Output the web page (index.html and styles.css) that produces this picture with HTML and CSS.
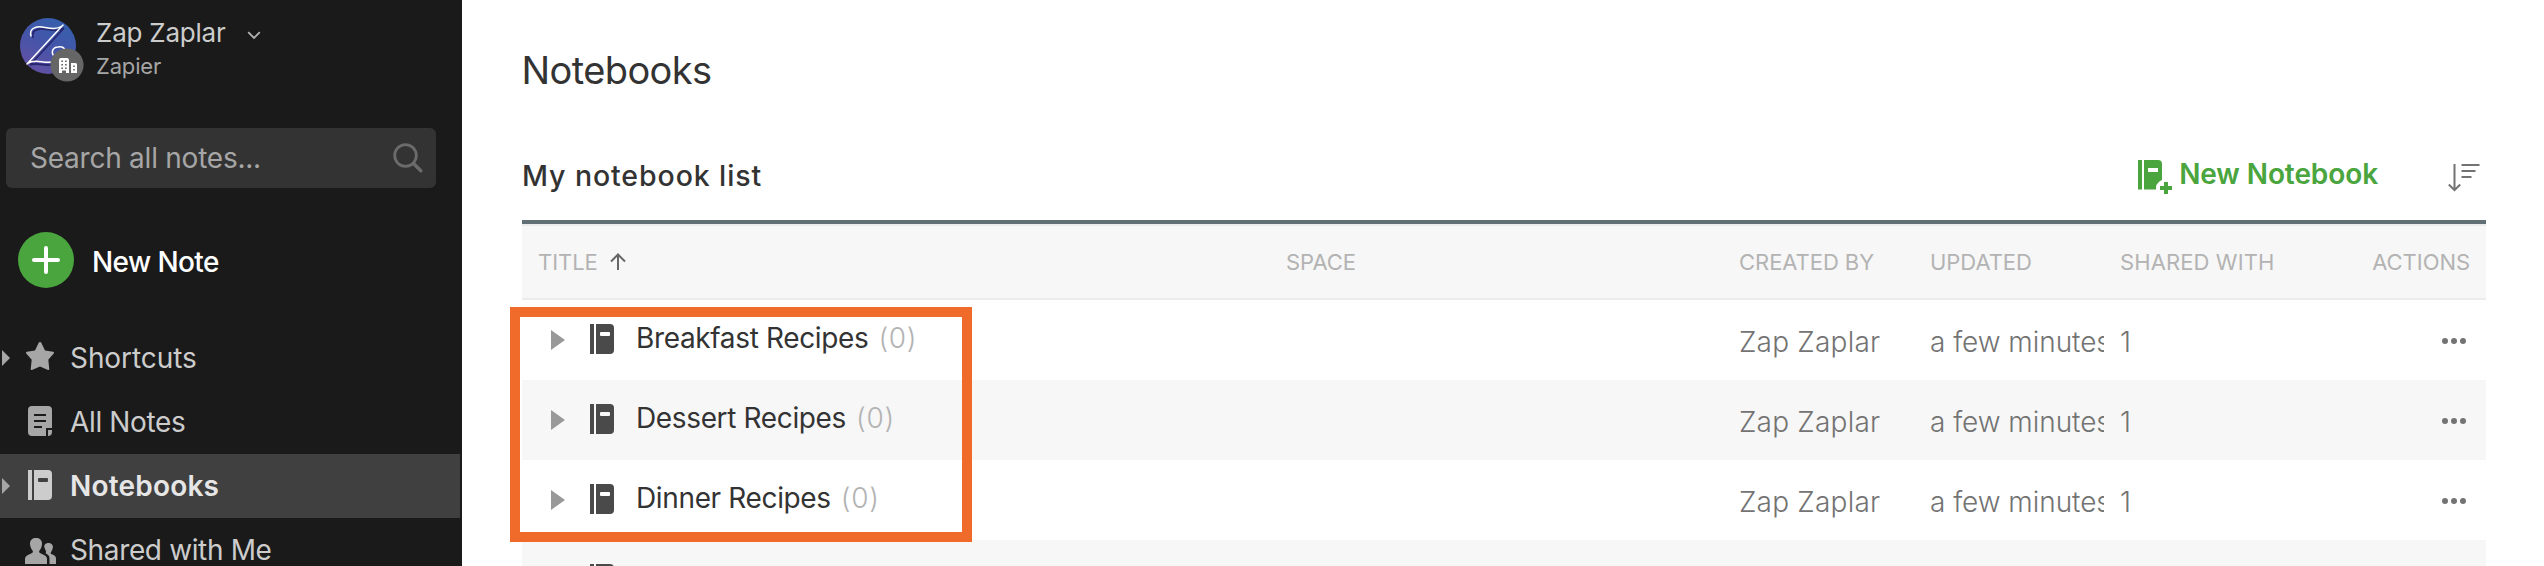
FILE: index.html
```html
<!DOCTYPE html>
<html lang="en">
<head>
<meta charset="utf-8">
<title>Notebooks</title>
<link rel="stylesheet" href="styles.css">
</head>
<body>
<svg class="defs" width="0" height="0">
  <symbol id="notebook" viewBox="0 0 24 30"><path d="M0 0h4v30H0zM6 0h14a4 4 0 0 1 4 4v22a4 4 0 0 1-4 4H6zM11 8a1 1 0 0 0-1 1v2a1 1 0 0 0 1 1h8a1 1 0 0 0 1-1V9a1 1 0 0 0-1-1z" fill="currentColor" fill-rule="evenodd"/></symbol>
  <symbol id="dots" viewBox="0 0 24 6"><g fill="currentColor"><circle cx="3" cy="3" r="3"/><circle cx="12" cy="3" r="3"/><circle cx="21" cy="3" r="3"/></g></symbol>
</svg>
<div class="app">
  <aside class="sidebar">
    <header class="account">
      <div class="avatar">
        <svg width="66" height="66" viewBox="0 0 66 66" overflow="visible">
          <defs><linearGradient id="av" x1="0.2" y1="1" x2="0.7" y2="0"><stop offset="0" stop-color="#6550a4"/><stop offset=".55" stop-color="#4455a8"/><stop offset="1" stop-color="#3560ad"/></linearGradient></defs>
          <circle cx="28" cy="28" r="28" fill="url(#av)"/>
          <g fill="none" stroke="#27276f" stroke-width="1.8" transform="translate(2 2)"><path d="M11 18C9 11 15 8 22 9s14 3 20-1L8 45c7-3 14 1 22 0"/></g>
          <g fill="none" stroke="#fff" stroke-width="1.5" stroke-linecap="round"><path d="M11 18C9 11 15 8 22 9s14 3 20-1M43 7 7 46M8 45c7-4 14 0 24-1M33 37c-2-5 1-8 5-8 4-1 7 1 7 4"/></g>
          <circle cx="47" cy="47" r="16.6" fill="#666"/>
          <path fill="#fff" fill-rule="evenodd" d="M39 55V42a2 2 0 0 1 2-2h6a2 2 0 0 1 2 2v13h-3v-2.500h-4V55zM41.300 42.500V44H43v-1.500zM45 42.500V44h1.700v-1.500zM41.300 46v1.500H43V46zM45 46v1.500h1.700V46zM41.300 49.500V51H43v-1.500zM45 49.500V51h1.700v-1.500zM51 45h4.500a1.500 1.500 0 0 1 1.500 1.500V55h-6zM53.200 47.500v1.500h1.600v-1.500zM53.200 51v1.500h1.600V51z"/>
        </svg>
      </div>
      <div class="who">
        <div class="who-name"><span>Zap Zaplar</span><svg width="14" height="9" viewBox="0 0 14 9"><path d="M1.200 1.200 7 7l5.800-5.800" fill="none" stroke="#b3b3b3" stroke-width="1.800"/></svg></div>
        <div class="who-org">Zapier</div>
      </div>
    </header>
    <div class="search"><span>Search all notes...</span><svg width="30" height="30" viewBox="0 0 30 30" fill="none" stroke="#6b6b6b" stroke-width="2.800"><circle cx="12.500" cy="12.500" r="10.800"/><path d="m20.500 20.500 7.300 7.300" stroke-width="3.400" stroke-linecap="round"/></svg></div>
    <div class="new-note"><svg width="56" height="56" viewBox="0 0 56 56"><circle cx="28" cy="28" r="28" fill="#4aa53e"/><path d="M28 16v24M16 28h24" stroke="#fff" stroke-width="4" stroke-linecap="round"/></svg><span>New Note</span></div>
    <nav class="nav">
      <a class="nav-item"><svg class="caret" viewBox="0 0 8 16"><path d="m0 0 8 8-8 8z"/></svg><span class="nav-icon star"><svg width="28" height="28" viewBox="0 0 28 28"><path fill="#a6a6a6" d="M12.700.8c.6-1.100 2-1.100 2.600 0l3.700 7.700 8.100 1.300c.9.200 1.200 1.100.6 1.800l-5.400 6.100 1 9.200c.1.900-.5 1.300-1.300 1L14 24.600l-8 3.300c-.8.300-1.400-.1-1.300-1l1-9.200L.3 11.600c-.6-.7-.3-1.600.6-1.800L9 8.500z"/></svg></span><span>Shortcuts</span></a>
      <a class="nav-item"><span class="caret"></span><span class="nav-icon"><svg width="24" height="30" viewBox="0 0 24 30"><path fill="#a6a6a6" d="M4 0h16a4 4 0 0 1 4 4v18h-6v8H4a4 4 0 0 1-4-4V4a4 4 0 0 1 4-4zM20 24h4v2a4 4 0 0 1-4 4z"/><path d="M6 9h12M6 15h12M6 21h8" stroke="#1a1a1a" stroke-width="2"/></svg></span><span class="all-notes">All Notes</span></a>
      <a class="nav-item active"><svg class="caret" viewBox="0 0 8 16"><path d="m0 0 8 8-8 8z"/></svg><span class="nav-icon"><svg width="24" height="30"><use href="#notebook"/></svg></span><span>Notebooks</span></a>
      <a class="nav-item"><span class="caret"></span><span class="nav-icon people"><svg width="31" height="26" viewBox="0 0 31 26"><path fill="#a6a6a6" d="M0 26v-5c0-2 1-3 3-4l4-2c1-.5 1.200-1.500.500-2.500C5.500 10 5 7.500 5 5.500 5 2 7.500 0 11 0s6 2 6 5.500c0 2-.5 4.500-2.500 7-.7 1-.5 2 .5 2.500l4 2c2 1 3 2 3 4v5zM24.500 26v-5.500c0-2.500-1.500-4-4-5.200 1-1.300.5-2-.5-4.300C18 7 20.500 5 23.500 5S29 7.500 27.500 11c-.5 1.500-1 2.300-1.500 3-.6.900-.4 1.600.5 2l2.500 1.200c1.500.8 2 1.800 2 3.800v5z"/></svg></span><span class="shared">Shared with Me</span></a>
    </nav>
  </aside>
  <main class="main">
    <h1 class="page-title">Notebooks</h1>
    <div class="list-head">
      <h2 class="list-title">My notebook list</h2>
      <button class="new-book"><svg width="34" height="34" viewBox="0 0 34 34"><path fill="#4aa53e" fill-rule="evenodd" d="M0 0h4v29.500H0zM6 0h14a4 4 0 0 1 4 4v16c-3 1-5 4-6 6v3.500H6zM10 8v4h10V8zM26 22h4v4h4v4h-4v4h-4v-4h-4v-4h4z"/></svg><span>New Notebook</span></button>
      <svg class="sort" width="32" height="28" viewBox="0 0 32 28" fill="none" stroke="#737373" stroke-width="2"><path d="M6.500 0v26M.8 20.500l5.700 5.700 5.700-5.700M13.500 1h18M13.500 7h14M13.500 13h10"/></svg>
    </div>
    <section class="table">
      <div class="row head"><span>TITLE<svg class="up" width="16" height="17" viewBox="0 0 16 17" fill="none" stroke="#666" stroke-width="2"><path d="M8 17V1.500M1 8.500l7-7 7 7"/></svg></span><span>SPACE</span><span>CREATED BY</span><span>UPDATED</span><span class="wide">SHARED WITH</span><span class="end">ACTIONS</span></div>
      <div class="row"><span class="c-name"><svg class="tri" viewBox="0 0 14 20"><path d="m0 0 14 10L0 20z"/></svg><svg class="book" width="24" height="30"><use href="#notebook"/></svg><span class="name">Breakfast Recipes</span><span class="count">(0)</span></span><span></span><span class="cell by">Zap Zaplar</span><span class="cell clip">a few minutes</span><span class="cell">1</span><span class="more"><svg width="24" height="6"><use href="#dots"/></svg></span></div>
      <div class="row alt"><span class="c-name"><svg class="tri" viewBox="0 0 14 20"><path d="m0 0 14 10L0 20z"/></svg><svg class="book" width="24" height="30"><use href="#notebook"/></svg><span class="name">Dessert Recipes</span><span class="count">(0)</span></span><span></span><span class="cell by">Zap Zaplar</span><span class="cell clip">a few minutes</span><span class="cell">1</span><span class="more"><svg width="24" height="6"><use href="#dots"/></svg></span></div>
      <div class="row"><span class="c-name"><svg class="tri" viewBox="0 0 14 20"><path d="m0 0 14 10L0 20z"/></svg><svg class="book" width="24" height="30"><use href="#notebook"/></svg><span class="name">Dinner Recipes</span><span class="count">(0)</span></span><span></span><span class="cell by">Zap Zaplar</span><span class="cell clip">a few minutes</span><span class="cell">1</span><span class="more"><svg width="24" height="6"><use href="#dots"/></svg></span></div>
      <div class="row alt"><span class="c-name"><svg class="tri" viewBox="0 0 14 20"><path d="m0 0 14 10L0 20z"/></svg><svg class="book" width="24" height="30"><use href="#notebook"/></svg></span></div>
    </section>
    <div class="highlight"></div>
  </main>
</div>
</body>
</html>
```
FILE: styles.css
```css
* { box-sizing: border-box; }
body { margin: 0; font-family: Inter, "Liberation Sans", sans-serif; background: #fff; }
.defs { position: absolute; }
.app { display: flex; height: 566px; overflow: hidden; }

/* Sidebar */
.sidebar { width: 462px; flex: none; background: #1a1a1a; color: #ccc; font-size: 28px; white-space: nowrap; }
.account { display: flex; height: 128px; padding: 18px 0 0 20px; }
.avatar { width: 76px; }
.who-name { display: flex; align-items: center; height: 30px; font-size: 26px; line-height: 30px; gap: 21px; letter-spacing: -.22px; }
.who-name svg { margin-top: 4px; }
.who-org { margin-top: 3px; font-size: 22px; line-height: 30px; letter-spacing: -.16px; color: #a6a6a6; }
.search { display: flex; align-items: center; justify-content: space-between; width: 430px; height: 60px; margin-left: 6px; padding: 0 13px 0 24px; border-radius: 6px; background: #333; color: #a6a6a6; letter-spacing: -.24px; }
.new-note { display: flex; align-items: center; gap: 18px; padding: 44px 0 0 18px; height: 100px; color: #fff; font-weight: 500; letter-spacing: -.6px; }
.new-note span { padding-top: 4px; }
.nav { margin-top: 38px; }
.nav-item { display: flex; align-items: center; height: 64px; width: 460px; padding-left: 2px; letter-spacing: -.08px; }
.nav-item.active { background: #404040; color: #e6e6e6; font-weight: 600; letter-spacing: .2px; }
.all-notes, .shared { letter-spacing: -.36px; }
.caret { width: 8px; height: 16px; fill: #a6a6a6; }
.nav-icon { display: flex; justify-content: center; width: 60px; padding-bottom: 2px; color: #ccc; }
.nav-icon.star { padding-bottom: 4px; }
.nav-icon.people { padding: 2px 0 0; }

/* Content */
.main { position: relative; flex: 1; padding: 47px 58px 0 60px; }
.page-title { margin: 0 0 0 -.5px; font-size: 38px; line-height: 46px; font-weight: 400; letter-spacing: -.6px; color: #333; }
.list-head { display: flex; align-items: center; height: 56px; margin-top: 54px; margin-bottom: 17px; }
.list-title { flex: 1; margin: 0; font-size: 28.5px; font-weight: 500; letter-spacing: .9px; color: #333; }
.new-book { display: flex; align-items: center; gap: 7px; border: 0; padding: 0; background: none; font: 600 28px Inter, sans-serif; letter-spacing: -.09px; color: #4aa53e; }
.new-book svg { margin-top: 4px; }
.new-book span { padding-bottom: 3px; }
.sort { margin-left: 70px; margin-right: 6px; margin-top: 5px; }

/* Table */
.table { border-top: 4px solid #5f6f73; }
.row { display: grid; grid-template-columns: 748px 453px 191px 190px 190px 1fr; height: 80px; padding: 0 16px; font-size: 28px; line-height: 80px; color: #737373; font-weight: 300; white-space: nowrap; }
.row.alt { background: #f7f7f7; }
.row.head { height: 76px; border-top: 2px solid #ebebeb; border-bottom: 2px solid #ebebeb; background: #f7f7f7; font-size: 22px; line-height: 72px; font-weight: 400; letter-spacing: -.05px; color: #b3b3b3; }
.row.head .wide { letter-spacing: .11px; }
.up { margin-left: 12px; }
.end { text-align: right; }
.c-name { display: flex; align-items: center; line-height: 76px; height: 76px; }
.tri { width: 14px; height: 20px; margin: 4px 25px 0 13px; fill: #999; }
.book { color: #4a4a4a; margin: 2px 22px 0 0; }
.name { color: #333; font-weight: 400; letter-spacing: -.36px; }
.count { margin-left: 10px; letter-spacing: .7px; color: #b3b3b3; }
.cell { padding-top: 2px; }
.by { letter-spacing: .21px; }
.clip { width: 174px; overflow: hidden; letter-spacing: -.05px; }
.more { display: flex; justify-content: flex-end; align-items: center; padding-right: 4px; color: #737373; }
.highlight { position: absolute; left: 48px; top: 307px; width: 462px; height: 235px; border: 10px solid #f06a2a; }
```
